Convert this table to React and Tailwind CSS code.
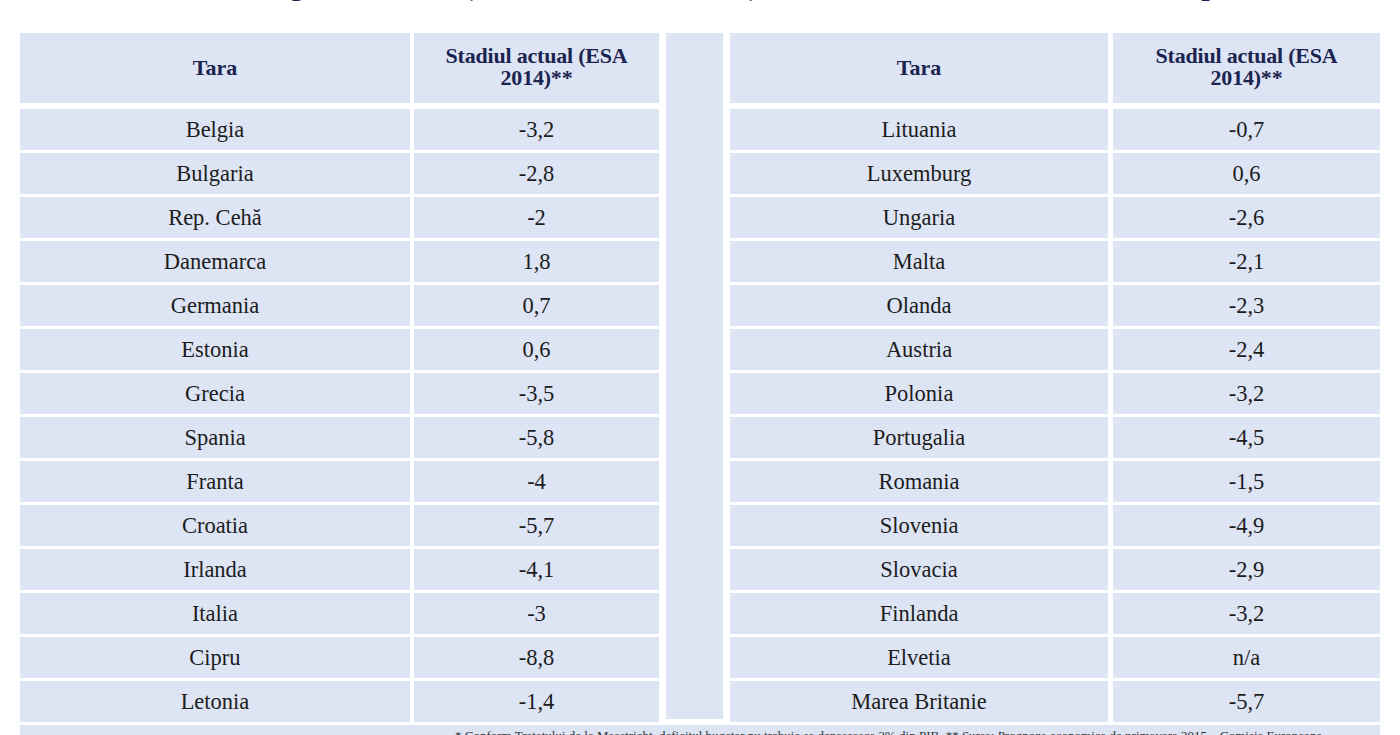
const left = [
  ["Belgia", "-3,2"],
  ["Bulgaria", "-2,8"],
  ["Rep. Cehă", "-2"],
  ["Danemarca", "1,8"],
  ["Germania", "0,7"],
  ["Estonia", "0,6"],
  ["Grecia", "-3,5"],
  ["Spania", "-5,8"],
  ["Franta", "-4"],
  ["Croatia", "-5,7"],
  ["Irlanda", "-4,1"],
  ["Italia", "-3"],
  ["Cipru", "-8,8"],
  ["Letonia", "-1,4"],
];

const right = [
  ["Lituania", "-0,7"],
  ["Luxemburg", "0,6"],
  ["Ungaria", "-2,6"],
  ["Malta", "-2,1"],
  ["Olanda", "-2,3"],
  ["Austria", "-2,4"],
  ["Polonia", "-3,2"],
  ["Portugalia", "-4,5"],
  ["Romania", "-1,5"],
  ["Slovenia", "-4,9"],
  ["Slovacia", "-2,9"],
  ["Finlanda", "-3,2"],
  ["Elvetia", "n/a"],
  ["Marea Britanie", "-5,7"],
];

const cell = "bg-[#dde4f4] flex items-center justify-center text-center";

function CountryTable({ rows, cols }) {
  return (
    <div className={`grid ${cols}`}>
      <div className={`${cell} h-[70px] font-bold text-[#1b2450] text-[22px] leading-[22px]`}>
        Tara
      </div>
      <div className={`${cell} h-[70px] font-bold text-[#1b2450] text-[22px] leading-[22px] pb-[2px] tracking-[-0.2px]`}>
        Stadiul actual (ESA
        <br />
        2014)**
      </div>
      <div className="col-span-2 h-[6px]" />
      {rows.map(([name, value]) => (
        <div key={name} className="contents">
          <div className={`${cell} h-[41px] mb-[3px] text-[22.5px] text-[#1c1c1c]`}>{name}</div>
          <div className={`${cell} h-[41px] mb-[3px] text-[22.5px] text-[#1c1c1c]`}>{value}</div>
        </div>
      ))}
    </div>
  );
}

export default function App() {
  return (
    <div className="w-[1400px] h-[735px] overflow-hidden bg-white font-['Liberation_Serif','Times_New_Roman',serif]">
      <div className="h-[33px] overflow-hidden relative">
        <div className="absolute left-0 right-0 bottom-[31px] text-center font-bold text-[30px] leading-[34px] text-[#1b2450] whitespace-nowrap">
          Deficitul bugetar in 2014 (% din PIB, ESA 2014) in tarile membre ale Uniunii Europene
        </div>
      </div>
      <div className="flex px-[20px]">
        <CountryTable rows={left} cols="grid-cols-[390px_245px] gap-x-[4px]" />
        <div className="ml-[7px] w-[57px] h-[686px] bg-[#dde4f4]" />
        <div className="ml-[7px]">
          <CountryTable rows={right} cols="grid-cols-[378px_267px] gap-x-[5px]" />
        </div>
      </div>
      <div className="mx-[20px] h-[40px] bg-[#dde4f4] pl-[435px] pt-[3px] text-[13px] leading-[15px] text-[#333] whitespace-nowrap">
        * Conform Tratatului de la Maastricht, deficitul bugetar nu trebuie sa depaseasca 3% din PIB. ** Sursa: Prognoza economica de primavara 2015 – Comisia Europeana
      </div>
    </div>
  );
}
